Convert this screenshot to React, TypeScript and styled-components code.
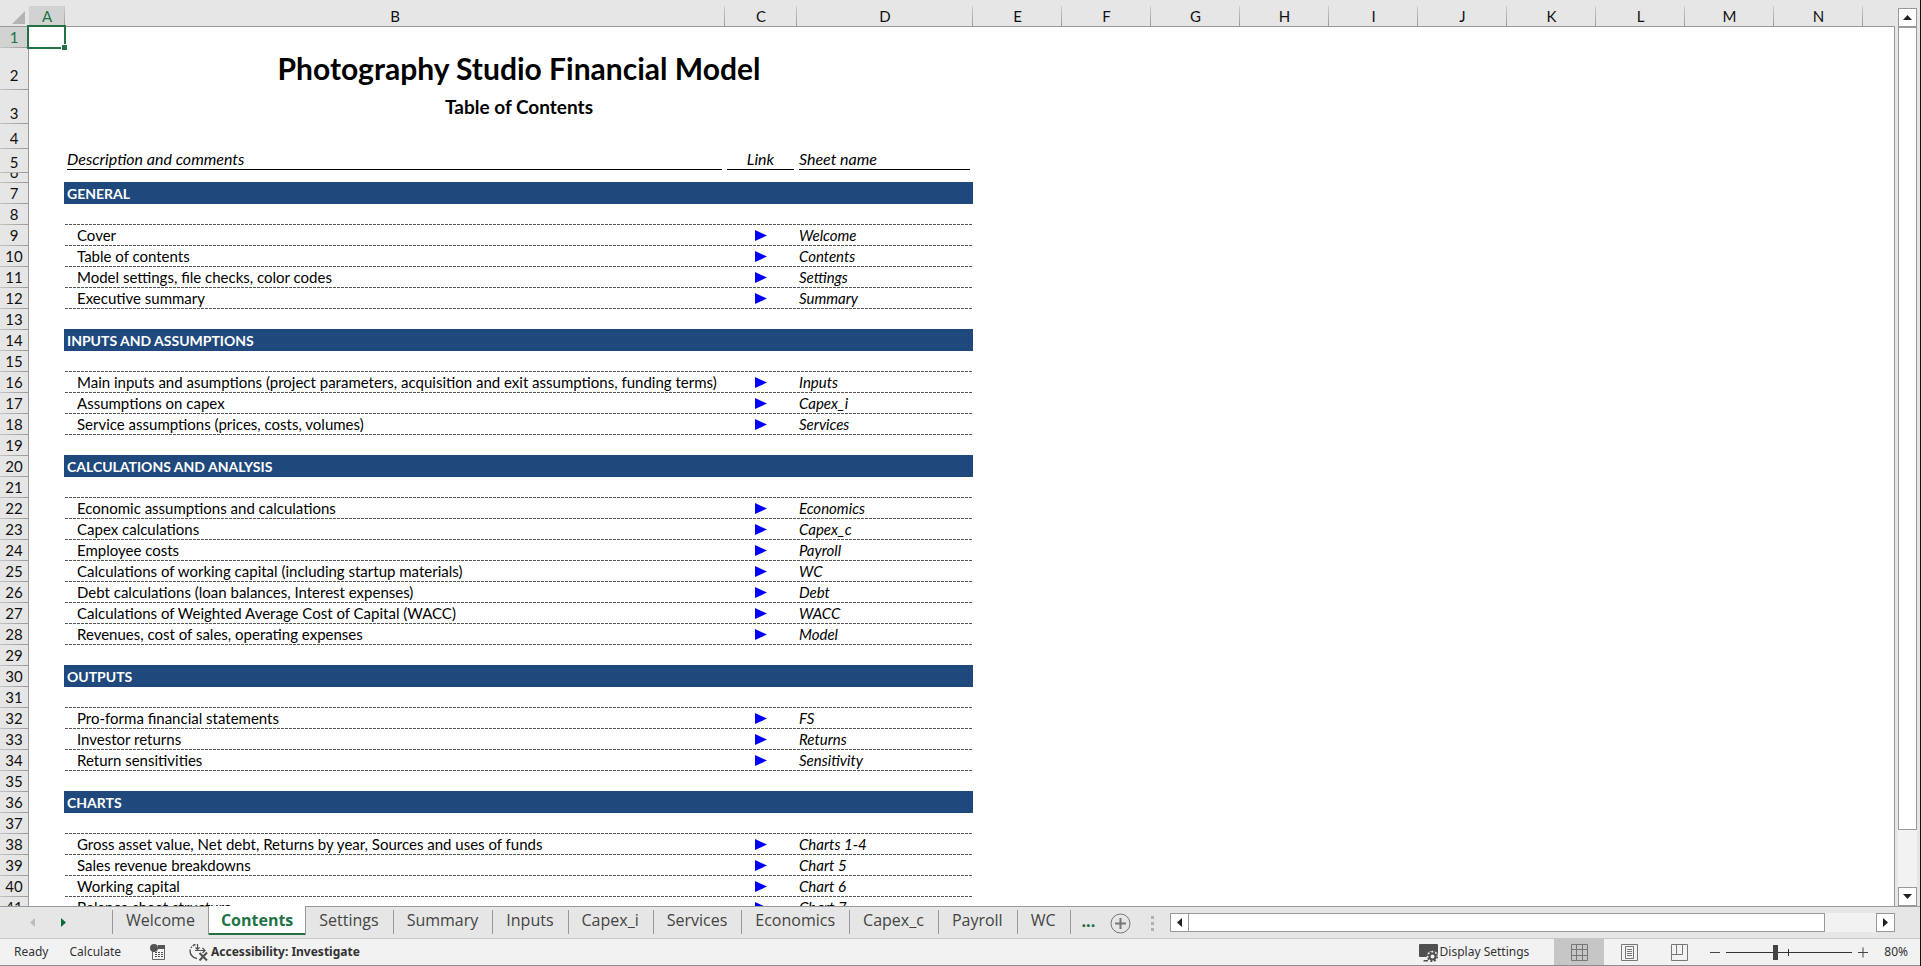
import React from "react";
import styled, { createGlobalStyle, css } from "styled-components";

const line = "#999999";
const chrome = "#e6e6e6";
const navy = "#1f497d";
const green = "#217346";
const sheetFont = `Lato, "Liberation Sans", sans-serif`;
const uiFont = `"Open Sans", "Noto Sans", sans-serif`;
const statusFont = `"Noto Sans", "Open Sans", sans-serif`;

const GlobalStyle = createGlobalStyle`
  *, *::before, *::after { box-sizing: border-box; }
  body { margin: 0; background: #fff; color: #000; }
  button { font: inherit; color: inherit; border: 0; background: none; padding: 0; margin: 0; cursor: pointer; }
  svg { display: block; }
`;

const Window = styled.div`
  display: flex;
  flex-direction: column;
  height: 100vh;
  overflow: hidden;
  border-right: 1px solid #111;
  background: ${chrome};
`;

const Workspace = styled.main`
  display: flex;
  flex: 1;
  min-height: 0;
`;

const SheetView = styled.div`
  flex: 1;
  min-width: 0;
  overflow: hidden;
  background: #fff;
`;

const Grid = styled.table`
  width: 100%;
  table-layout: fixed;
  border-collapse: separate;
  border-spacing: 0;
  font-family: ${sheetFont};
  font-size: 15px;
  line-height: 20px;
  th, td { padding: 0; }
`;

const Col = styled.col<{ $w?: number }>`
  width: ${(p) => (p.$w ? `${p.$w}px` : "auto")};
`;

const Corner = styled.td`
  height: 27px;
  background: ${chrome};
  border-bottom: 1px solid ${line};
  svg { margin: 9px 0 0 12px; }
`;

const ColumnHeader = styled.th<{ $active?: boolean; $last?: boolean }>`
  height: 27px;
  vertical-align: bottom;
  font-weight: 400;
  color: ${(p) => (p.$active ? green : "#111")};
  border-bottom: 1px solid ${line};
  background-color: ${chrome};
  background-image: ${(p) =>
    p.$last
      ? "none"
      : `linear-gradient(#cfcfcf, ${line})${p.$active ? ", linear-gradient(#d2d2d2, #d2d2d2)" : ""}`};
  background-repeat: no-repeat;
  background-position: right bottom;
  background-size: 1px 20px, 100% 20px;
`;

const RowHeader = styled.th<{ $active?: boolean }>`
  font-weight: 400;
  color: ${(p) => (p.$active ? green : "#111")};
  border-right: 1px solid ${line};
  background-color: ${(p) => (p.$active ? "#d2d2d2" : chrome)};
  background-image: linear-gradient(to right, #c4c4c4, ${line});
  background-repeat: no-repeat;
  background-position: left bottom;
  background-size: 100% 1px;
`;

const RowNumber = styled.div<{ $h: number; $raised?: boolean }>`
  display: flex;
  align-items: flex-end;
  justify-content: center;
  height: ${(p) => p.$h}px;
  padding-bottom: ${(p) => (p.$raised ? 5 : 1)}px;
  overflow: hidden;
`;

const ActiveCell = styled.td`
  position: relative;
`;

const Selection = styled.div`
  position: absolute;
  inset: -2px -1px -1px -2px;
  border: 2px solid ${green};
  &::after {
    content: "";
    position: absolute;
    right: -3px;
    bottom: -3px;
    width: 6px;
    height: 6px;
    background: ${green};
    border: solid #fff;
    border-width: 1px 0 0 1px;
  }
`;

const Title = styled.td`
  font-size: 30px;
  line-height: 41px;
  font-weight: 700;
  text-align: center;
  vertical-align: top;
`;

const Subtitle = styled.td`
  font-size: 19px;
  line-height: 33px;
  font-weight: 700;
  text-align: center;
  vertical-align: top;
`;

const FieldCell = styled.td`
  vertical-align: top;
`;

const FieldName = styled.div<{ $center?: boolean }>`
  margin: 0 3px 0 2px;
  border-bottom: 1px solid #000;
  font-size: 16px;
  font-style: italic;
  text-align: ${(p) => (p.$center ? "center" : "left")};
`;

const Banner = styled.td`
  padding: 0 0 0 2px !important;
  background: ${navy};
  box-shadow: -1px 0 0 ${navy}, 0 -1px 0 ${navy}, -1px -1px 0 ${navy};
  color: #fff;
  font-size: 14px;
  font-weight: 700;
`;

const dashed = css`
  background-image: repeating-linear-gradient(to right, #555 0 3px, transparent 3px 4px);
  background-repeat: no-repeat;
  background-position: left bottom;
  background-size: 100% 1px;
`;

const Ruled = styled.td`
  ${dashed}
`;

const Description = styled.td`
  ${dashed}
  vertical-align: top;
  white-space: nowrap;
  span { padding-left: 12px; }
`;

const LinkCell = styled.td`
  ${dashed}
  vertical-align: top;
`;

const SheetLink = styled.a`
  display: flex;
  justify-content: center;
  padding-top: 5px;
  color: #0000ff;
`;

const SheetName = styled.td`
  ${dashed}
  vertical-align: top;
  font-style: italic;
  span { padding-left: 2px; }
`;

const VerticalBar = styled.div`
  display: flex;
  flex-direction: column;
  width: 26px;
  padding: 8px 3px 0 4px;
  background: linear-gradient(${line}, ${line}) left bottom / 1px calc(100% - 26px) no-repeat;
`;

const ArrowButton = styled.button`
  display: flex;
  align-items: center;
  justify-content: center;
  flex: none;
  width: 19px;
  height: 19px;
  background: #fff;
  border: 1px solid ${line};
  color: #222;
`;

const VerticalTrack = styled.div`
  flex: 1;
  min-height: 0;
  background: #f2f2f2;
`;

const VerticalThumb = styled.div`
  height: 93.4%;
  background: #fff;
  border: 1px solid ${line};
`;

const TabBar = styled.nav`
  display: flex;
  flex: none;
  height: 32px;
  border-top: 1px solid ${line};
  font-family: ${uiFont};
  font-size: 16px;
  line-height: 26px;
  color: #444;
`;

const TabArrows = styled.div`
  display: flex;
  gap: 26px;
  width: 113px;
  height: 28px;
  padding: 3px 0 0 30px;
  background: linear-gradient(${line}, ${line}) right 3px / 1px 24px no-repeat;
`;

const TabArrow = styled.button<{ $off?: boolean }>`
  display: flex;
  align-items: center;
  color: ${(p) => (p.$off ? "#bdbdbd" : "#0e6b38")};
`;

const Tab = styled.button<{ $active?: boolean; $beforeActive?: boolean }>`
  display: flex;
  align-items: flex-start;
  flex: none;
  height: 28px;
  padding: 0 ${(p) => (p.$beforeActive ? 13 : 15)}px 0 13px;
  background: ${(p) =>
    p.$beforeActive ? "none" : `linear-gradient(${line}, ${line}) right 3px / 1px 24px no-repeat`};
  ${(p) =>
    p.$active &&
    css`
      height: 29px;
      margin-top: -1px;
      padding: 1px 12px 0;
      background: #fff;
      border: solid ${line};
      border-width: 0 1px;
      box-shadow: inset 0 -2px 0 ${green};
      color: ${green};
      font-weight: 700;
    `}
`;

const MoreTabs = styled.button`
  width: 39px;
  height: 28px;
  padding-left: 11px;
  text-align: left;
  color: #0e6b38;
  font-weight: 700;
`;

const AddSheet = styled.button`
  display: flex;
  align-items: center;
  height: 32px;
  color: #777;
`;

const Splitter = styled.div`
  display: flex;
  flex-direction: column;
  gap: 3px;
  padding: 9px 16px 0 20px;
  span { width: 3px; height: 3px; background: #b0b0b0; }
`;

const HorizontalBar = styled.div`
  display: flex;
  flex: 1;
  min-width: 0;
  margin: 6px 25px 0 0;
  height: 19px;
`;

const HorizontalTrack = styled.div`
  flex: 1;
  min-width: 0;
  background: #f2f2f2;
`;

const HorizontalThumb = styled.div`
  width: 92.7%;
  height: 19px;
  margin-left: -1px;
  background: #fff;
  border: 1px solid ${line};
`;

const StatusBar = styled.footer`
  display: flex;
  align-items: center;
  flex: none;
  height: 28px;
  padding: 0 12px 0 14px;
  border-top: 1px solid #c6c6c6;
  border-bottom: 1px solid #8c8c8c;
  background: #f2f2f2;
  font-family: ${statusFont};
  font-size: 12px;
  line-height: 26px;
  color: #333;
`;

const StatusItem = styled.button<{ $bold?: boolean; $gap: number }>`
  display: flex;
  align-items: center;
  flex: none;
  gap: 2px;
  margin-right: ${(p) => p.$gap}px;
  font-weight: ${(p) => (p.$bold ? 700 : 400)};
`;

const Spacer = styled.div`
  flex: 1;
`;

const ViewButton = styled.button<{ $active?: boolean }>`
  display: flex;
  align-items: center;
  justify-content: center;
  width: 50px;
  height: 26px;
  background: ${(p) => (p.$active ? "#c6c6c6" : "none")};
  color: #777;
`;

const ZoomControl = styled.div`
  display: flex;
  align-items: center;
  gap: 6px;
  margin: 0 16px 0 6px;
  color: #444;
`;

const ZoomRange = styled.input`
  appearance: none;
  width: 126px;
  height: 16px;
  margin: 0;
  background:
    linear-gradient(#333, #333) 62px center / 1px 7px no-repeat,
    linear-gradient(#333, #333) center / 100% 1px no-repeat;
  &::-webkit-slider-thumb {
    appearance: none;
    width: 5px;
    height: 15px;
    background: #444;
  }
`;

type Row =
  | { kind: "blank" | "title" | "subtitle" | "fields" | "ruled" }
  | { kind: "banner"; text: string }
  | { kind: "item"; text: string; sheet: string };

const sections: { name: string; items: [string, string][] }[] = [
  {
    name: "GENERAL",
    items: [
      ["Cover", "Welcome"],
      ["Table of contents", "Contents"],
      ["Model settings, file checks, color codes", "Settings"],
      ["Executive summary", "Summary"],
    ],
  },
  {
    name: "INPUTS AND ASSUMPTIONS",
    items: [
      ["Main inputs and asumptions (project parameters, acquisition and exit assumptions, funding terms)", "Inputs"],
      ["Assumptions on capex", "Capex_i"],
      ["Service assumptions (prices, costs, volumes)", "Services"],
    ],
  },
  {
    name: "CALCULATIONS AND ANALYSIS",
    items: [
      ["Economic assumptions and calculations", "Economics"],
      ["Capex calculations", "Capex_c"],
      ["Employee costs", "Payroll"],
      ["Calculations of working capital (including startup materials)", "WC"],
      ["Debt calculations (loan balances, Interest expenses)", "Debt"],
      ["Calculations of Weighted Average Cost of Capital (WACC)", "WACC"],
      ["Revenues, cost of sales, operating expenses", "Model"],
    ],
  },
  {
    name: "OUTPUTS",
    items: [
      ["Pro-forma financial statements", "FS"],
      ["Investor returns", "Returns"],
      ["Return sensitivities", "Sensitivity"],
    ],
  },
  {
    name: "CHARTS",
    items: [
      ["Gross asset value, Net debt, Returns by year, Sources and uses of funds", "Charts 1-4"],
      ["Sales revenue breakdowns", "Chart 5"],
      ["Working capital", "Chart 6"],
      ["Balance sheet structure", "Chart 7"],
    ],
  },
];

const rows: Row[] = [
  { kind: "blank" },
  { kind: "title" },
  { kind: "subtitle" },
  { kind: "blank" },
  { kind: "fields" },
  { kind: "blank" },
];
sections.forEach((s, i) => {
  if (i > 0) rows.push({ kind: "blank" });
  rows.push({ kind: "banner", text: s.name }, { kind: "ruled" });
  s.items.forEach(([text, sheet]) => rows.push({ kind: "item", text, sheet }));
});

const rowHeights: Record<number, number> = { 2: 42, 3: 34, 4: 25, 5: 24, 6: 10 };
const columns = "ABCDEFGHIJKLMN".split("");
const columnWidths = [36, 660, 72, 176];
const tabs = ["Welcome", "Contents", "Settings", "Summary", "Inputs", "Capex_i", "Services", "Economics", "Capex_c", "Payroll", "WC"];

const Triangle = ({ dir, size = 9 }: { dir: "up" | "down" | "left" | "right"; size?: number }) => {
  const half = Math.ceil(size / 2);
  const wide = dir === "up" || dir === "down";
  const w = wide ? size : half;
  const h = wide ? half : size;
  const points = {
    up: `0,${h} ${w / 2},0 ${w},${h}`,
    down: `0,0 ${w},0 ${w / 2},${h}`,
    left: `${w},0 ${w},${h} 0,${h / 2}`,
    right: `0,0 ${w},${h / 2} 0,${h}`,
  }[dir];
  return (
    <svg width={w} height={h} aria-hidden="true">
      <polygon points={points} fill="currentColor" />
    </svg>
  );
};

const RowCells = ({ row, index }: { row: Row; index: number }) => {
  switch (row.kind) {
    case "title":
      return (<><td /><Title colSpan={3}>Photography Studio Financial Model</Title></>);
    case "subtitle":
      return (<><td /><Subtitle colSpan={3}>Table of Contents</Subtitle></>);
    case "fields":
      return (
        <>
          <td />
          <FieldCell><FieldName>Description and comments</FieldName></FieldCell>
          <FieldCell><FieldName $center>Link</FieldName></FieldCell>
          <FieldCell><FieldName>Sheet name</FieldName></FieldCell>
        </>
      );
    case "banner":
      return (<><td /><Banner colSpan={3}>{row.text}</Banner></>);
    case "ruled":
      return (<><td /><Ruled colSpan={3} /></>);
    case "item":
      return (
        <>
          <td />
          <Description><span>{row.text}</span></Description>
          <LinkCell>
            <SheetLink href={`#${row.sheet}`} aria-label={`Go to ${row.sheet}`}>
              <svg width="12" height="11" aria-hidden="true"><polygon points="0,0 12,5.5 0,11" fill="currentColor" /></svg>
            </SheetLink>
          </LinkCell>
          <SheetName><span>{row.sheet}</span></SheetName>
        </>
      );
    default:
      return index === 0 ? <ActiveCell><Selection /></ActiveCell> : <td />;
  }
};

const MacroIcon = () => (
  <svg width="15" height="16" viewBox="0 0 15 16" aria-hidden="true">
    <path d="M2.5 6V15.5H14.500V2" fill="none" stroke="#666" />
    <rect x="8" y="1" width="7" height="4" fill="#555" />
    <circle cx="4" cy="4" r="4" fill="#555" />
    <path d="M5 8.500H13M5 10.500H13M5 12.500H13" stroke="#555" strokeDasharray="2 1" />
  </svg>
);

const AccessibilityIcon = () => (
  <svg width="20" height="18" viewBox="0 0 20 18" fill="none" stroke="#505050" aria-hidden="true">
    <path d="M6.500 1.500A7.500 7.500 0 0 0 2 5" strokeWidth="1.400" strokeDasharray="3 1" />
    <path d="M1.300 6.500A7.500 7.500 0 0 0 8 15.500" strokeWidth="1.400" />
    <path d="M8.500 1V6M6.500 4.500L8.500 6.500L10.500 4.500M6 7.500H16M13.500 5L16 7.500L13.500 10" strokeWidth="1.200" />
    <path d="M10.500 10L18 17.500M18 9.500L10.500 17.500" strokeWidth="2" />
  </svg>
);

const DisplayIcon = () => (
  <svg width="19" height="19" viewBox="0 0 19 19" aria-hidden="true">
    <rect x="0" y="1" width="19" height="13" rx="1" fill="#505050" />
    <path d="M4 18.500H9V17H5Z" fill="#505050" />
    <circle cx="13.500" cy="13.500" r="5.800" fill="#f2f2f2" />
    <circle cx="13.500" cy="13.500" r="4.600" fill="none" stroke="#505050" strokeWidth="1.800" strokeDasharray="2 1.610" />
    <circle cx="13.500" cy="13.500" r="3" fill="none" stroke="#505050" strokeWidth="2" />
  </svg>
);

export default function App() {
  return (
    <Window>
      <GlobalStyle />
      <Workspace>
        <SheetView>
          <Grid>
            <colgroup>
              <Col $w={29} />
              {columns.map((c, i) => <Col key={c} $w={columnWidths[i] ?? 89} />)}
              <Col />
            </colgroup>
            <thead>
              <tr>
                <Corner>
                  <svg width="13" height="13" aria-hidden="true"><polygon points="13,0 13,13 0,13" fill="#b4b4b4" /></svg>
                </Corner>
                {columns.map((c) => <ColumnHeader key={c} scope="col" $active={c === "A"}>{c}</ColumnHeader>)}
                <ColumnHeader as="td" $last />
              </tr>
            </thead>
            <tbody>
              {rows.map((row, i) => (
                <tr key={i}>
                  <RowHeader scope="row" $active={i === 0}>
                    <RowNumber $h={rowHeights[i + 1] ?? 21} $raised={row.kind === "title"}>{i + 1}</RowNumber>
                  </RowHeader>
                  <RowCells row={row} index={i} />
                </tr>
              ))}
            </tbody>
          </Grid>
        </SheetView>
        <VerticalBar>
          <ArrowButton aria-label="Scroll up"><Triangle dir="up" /></ArrowButton>
          <VerticalTrack><VerticalThumb /></VerticalTrack>
          <ArrowButton aria-label="Scroll down"><Triangle dir="down" /></ArrowButton>
        </VerticalBar>
      </Workspace>
      <TabBar aria-label="Sheets">
        <TabArrows>
          <TabArrow $off aria-label="Previous sheets"><Triangle dir="left" /></TabArrow>
          <TabArrow aria-label="Next sheets"><Triangle dir="right" /></TabArrow>
        </TabArrows>
        {tabs.map((t) => <Tab key={t} $active={t === "Contents"} $beforeActive={t === "Welcome"}>{t}</Tab>)}
        <MoreTabs aria-label="More sheets">...</MoreTabs>
        <AddSheet aria-label="New sheet">
          <svg width="21" height="21" fill="none" stroke="currentColor" aria-hidden="true">
            <circle cx="10.500" cy="10.500" r="9.500" />
            <path d="M5 10.500H16M10.500 5V16" strokeWidth="2" />
          </svg>
        </AddSheet>
        <Splitter><span /><span /><span /></Splitter>
        <HorizontalBar>
          <ArrowButton aria-label="Scroll left"><Triangle dir="left" /></ArrowButton>
          <HorizontalTrack><HorizontalThumb /></HorizontalTrack>
          <ArrowButton aria-label="Scroll right"><Triangle dir="right" /></ArrowButton>
        </HorizontalBar>
      </TabBar>
      <StatusBar>
        <StatusItem $gap={21}>Ready</StatusItem>
        <StatusItem $gap={29}>Calculate</StatusItem>
        <StatusItem $gap={24} aria-label="Record macro"><MacroIcon /></StatusItem>
        <StatusItem $gap={0} $bold><AccessibilityIcon />Accessibility: Investigate</StatusItem>
        <Spacer />
        <StatusItem $gap={25}><DisplayIcon />Display Settings</StatusItem>
        <ViewButton $active aria-label="Normal view">
          <svg width="17" height="17" fill="none" stroke="currentColor" aria-hidden="true">
            <path d="M.5.5H16.500V16.500H.5ZM.5 5.500H16.500M.5 11.500H16.500M5.500.5V16.500M11.500.5V16.500" />
          </svg>
        </ViewButton>
        <ViewButton aria-label="Page layout view">
          <svg width="17" height="17" fill="none" stroke="currentColor" aria-hidden="true">
            <path d="M.5.5H16.500V16.500H.5ZM4.500 2.500H12.500V14.500H4.500ZM6 5.500H11M6 7.500H11M6 9.500H11M6 11.500H11" />
          </svg>
        </ViewButton>
        <ViewButton aria-label="Page break preview">
          <svg width="17" height="17" fill="none" stroke="currentColor" aria-hidden="true">
            <path d="M.5.5H16.500V16.500H.5ZM.5 10.500H11.500V.5M5.500.5V10.500" />
          </svg>
        </ViewButton>
        <ZoomControl>
          <button aria-label="Zoom out"><svg width="10" height="11" stroke="currentColor" aria-hidden="true"><path d="M0 5.500H10" /></svg></button>
          <ZoomRange type="range" aria-label="Zoom" min={10} max={190} defaultValue={80} />
          <button aria-label="Zoom in"><svg width="10" height="11" stroke="currentColor" aria-hidden="true"><path d="M0 5.500H10M5 .5V10.500" /></svg></button>
        </ZoomControl>
        <StatusItem $gap={0}>80%</StatusItem>
      </StatusBar>
    </Window>
  );
}
